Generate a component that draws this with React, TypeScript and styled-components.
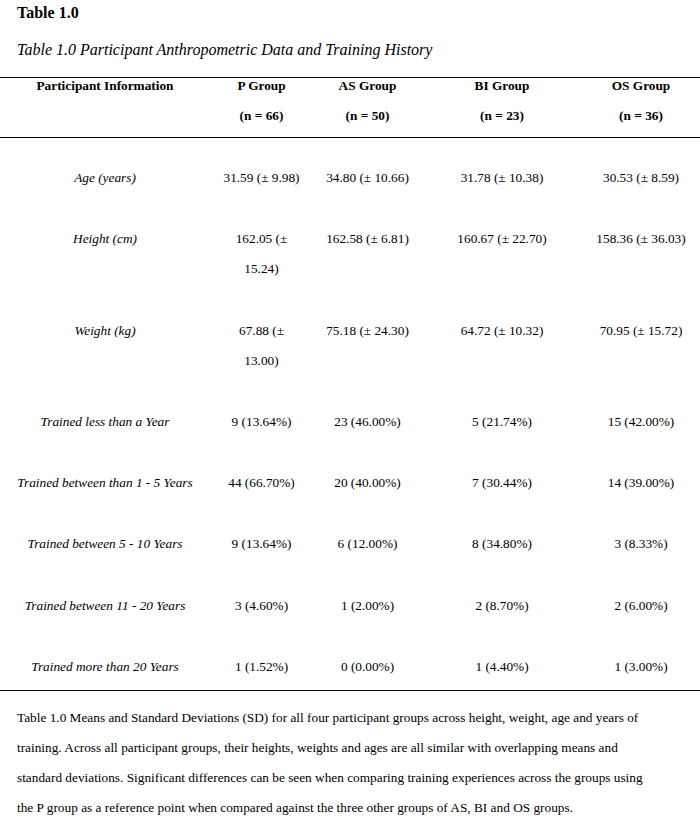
import React from "react";
import styled, { createGlobalStyle } from "styled-components";

const GlobalStyle = createGlobalStyle`
  html, body {
    margin: 0;
    padding: 0;
    background: #ffffff;
  }
  body {
    font-family: "Liberation Serif", "Times New Roman", serif;
    color: #000000;
  }
`;

const Page = styled.div`
  width: 700px;
  padding-top: 3px;
  font-family: "Liberation Serif", "Times New Roman", serif;
  color: #000;
`;

const Title = styled.div`
  padding-left: 17px;
  font-size: 16px;
  line-height: 20px;
  font-weight: bold;
`;

const Caption = styled.div`
  margin-top: 17px;
  padding-left: 17px;
  font-size: 16px;
  line-height: 20px;
  font-style: italic;
`;

const Table = styled.div`
  margin-top: 17px;
  width: 700px;
  font-size: 13.3px;
`;

const columns = "210px 103px 109px 160px 1fr";

const HeaderRow = styled.div`
  display: grid;
  grid-template-columns: ${columns};
  border-top: 1px solid #000;
  border-bottom: 1px solid #000;
  padding-bottom: 13px;
`;

const HeaderCell = styled.div`
  display: flex;
  flex-direction: column;
  align-items: center;
  gap: 14px;
  line-height: 16px;
  font-weight: bold;
  text-align: center;
`;

const Body = styled.div`
  display: flex;
  flex-direction: column;
  gap: 31.3px;
  padding: 25px 0 8px;
  border-bottom: 1px solid #000;
`;

const Row = styled.div`
  display: grid;
  grid-template-columns: ${columns};
  align-items: start;
`;

const Cell = styled.div<{ $label?: boolean }>`
  line-height: 30px;
  text-align: center;
  padding: 0 12px;
  font-style: ${(p) => (p.$label ? "italic" : "normal")};
`;

const Note = styled.p`
  margin: 12px 0 0;
  padding: 0 0 0 17px;
  width: 640px;
  font-size: 13.3px;
  line-height: 30px;
`;

const headers: [string, string][] = [
  ["Participant Information", ""],
  ["P Group", "(n = 66)"],
  ["AS Group", "(n = 50)"],
  ["BI Group", "(n = 23)"],
  ["OS Group", "(n = 36)"],
];

const rows: string[][] = [
  ["Age (years)", "31.59 (± 9.98)", "34.80 (± 10.66)", "31.78 (± 10.38)", "30.53 (± 8.59)"],
  ["Height (cm)", "162.05 (± 15.24)", "162.58 (± 6.81)", "160.67 (± 22.70)", "158.36 (± 36.03)"],
  ["Weight (kg)", "67.88 (± 13.00)", "75.18 (± 24.30)", "64.72 (± 10.32)", "70.95 (± 15.72)"],
  ["Trained less than a Year", "9 (13.64%)", "23 (46.00%)", "5 (21.74%)", "15 (42.00%)"],
  ["Trained between than 1 - 5 Years", "44 (66.70%)", "20 (40.00%)", "7 (30.44%)", "14 (39.00%)"],
  ["Trained between 5 - 10 Years", "9 (13.64%)", "6 (12.00%)", "8 (34.80%)", "3 (8.33%)"],
  ["Trained between 11 - 20 Years", "3 (4.60%)", "1 (2.00%)", "2 (8.70%)", "2 (6.00%)"],
  ["Trained more than 20 Years", "1 (1.52%)", "0 (0.00%)", "1 (4.40%)", "1 (3.00%)"],
];

export default function App() {
  return (
    <Page>
      <GlobalStyle />
      <Title>Table 1.0</Title>
      <Caption>Table 1.0 Participant Anthropometric Data and Training History</Caption>
      <Table>
        <HeaderRow>
          {headers.map(([a, b]) => (
            <HeaderCell key={a}>
              <span>{a}</span>
              {b && <span>{b}</span>}
            </HeaderCell>
          ))}
        </HeaderRow>
        <Body>
          {rows.map((r) => (
            <Row key={r[0]}>
              {r.map((c, i) => (
                <Cell key={i} $label={i === 0}>
                  {c}
                </Cell>
              ))}
            </Row>
          ))}
        </Body>
      </Table>
      <Note>
        Table 1.0 Means and Standard Deviations (SD) for all four participant groups across height, weight, age and
        years of training. Across all participant groups, their heights, weights and ages are all similar with
        overlapping means and standard deviations. Significant differences can be seen when comparing training
        experiences across the groups using the P group as a reference point when compared against the three other
        groups of AS, BI and OS groups.
      </Note>
    </Page>
  );
}
